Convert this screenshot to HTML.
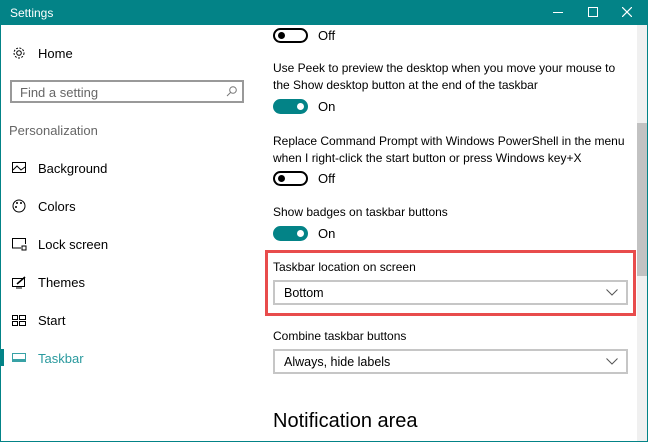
<!DOCTYPE html>
<html><head><style>
*{margin:0;padding:0;box-sizing:border-box}
body{width:648px;height:442px;position:relative;overflow:hidden;background:#fff;font-family:"Liberation Sans",sans-serif;color:#000}
.t{position:absolute;white-space:nowrap}
.title{position:absolute;left:0;top:0;width:648px;height:25px;background:#038387;color:#fff;font-size:12px}
.nav{font-size:13px;position:absolute;left:38px}
.ic{position:absolute;left:12px}
.tg{position:absolute;left:273px;width:35px;height:15px;border-radius:8px}
.off{border:2px solid #000}
.off:after{content:"";position:absolute;left:3px;top:2px;width:7px;height:7px;border-radius:50%;background:#000}
.on{background:#038387}
.on:after{content:"";position:absolute;right:4px;top:4px;width:7px;height:7px;border-radius:50%;background:#fff}
.lbl{font-size:13px;left:318px}
.p{font-size:12px;left:273px;line-height:17px}
.dd{position:absolute;left:273px;width:355px;height:25px;border:2px solid #c6c6c6;font-size:12.5px;padding:4px 0 0 9px}
.dd svg{position:absolute;right:8px;top:7px}
</style></head><body>
<div class="title"><span class="t" style="left:10px;top:6px">Settings</span>
<span class="t" style="left:553px;top:12px;width:10px;height:1px;background:#fff"></span>
<span class="t" style="left:588px;top:7px;width:10px;height:10px;border:1px solid #fff"></span>
<svg class="t" style="left:622px;top:7px" width="10" height="10"><path d="M0 0L10 10M10 0L0 10" stroke="#fff" stroke-width="1.2"/></svg>
</div>
<div class="t" style="left:0;top:25px;width:1px;height:417px;background:#038387"></div>
<div class="t" style="left:647px;top:25px;width:1px;height:417px;background:#038387"></div>
<div class="t" style="left:0;top:441px;width:648px;height:1px;background:#038387"></div>
<div class="t" style="left:637px;top:25px;width:10px;height:416px;background:#f0f0f0"></div>
<div class="t" style="left:637px;top:123px;width:10px;height:153px;background:#c2c2c2"></div>
<svg class="ic" style="top:46px" width="14" height="14" viewBox="0 0 14 14"><circle cx="7" cy="7" r="2.3" fill="none" stroke="#000"/><circle cx="7" cy="7" r="5" fill="none" stroke="#000" stroke-dasharray="2 1.4"/></svg>
<span class="t nav" style="top:46px">Home</span>
<div class="t" style="left:10px;top:80px;width:234px;height:23px;border:2px solid #999;font-size:13px;color:#666;padding:3px 0 0 8px">Find a setting
<svg style="position:absolute;right:5px;top:4px" width="11" height="11"><circle cx="7" cy="4" r="3.3" fill="none" stroke="#777"/><path d="M4.5 6.5L1 10" stroke="#777"/></svg></div>
<span class="t" style="left:9px;top:123px;font-size:13px;color:#666">Personalization</span>
<svg class="ic" style="top:162px" width="14" height="12"><rect x=".5" y=".5" width="13" height="10" fill="none" stroke="#000"/><path d="M1 8L5 4L9 8L13 5" fill="none" stroke="#000"/></svg>
<span class="t nav" style="top:161px">Background</span>
<svg class="ic" style="top:199px" width="14" height="14"><circle cx="7" cy="7" r="6" fill="none" stroke="#000"/><circle cx="5" cy="4" r="1" fill="#000"/><circle cx="9" cy="4" r="1" fill="#000"/><circle cx="4" cy="8" r="1" fill="#000"/></svg>
<span class="t nav" style="top:199px">Colors</span>
<svg class="ic" style="top:238px" width="15" height="13"><path d="M9 10H.5V.5h13V6" fill="none" stroke="#000"/><rect x="10" y="8" width="4" height="4" fill="none" stroke="#000"/></svg>
<span class="t nav" style="top:237px">Lock screen</span>
<svg class="ic" style="top:276px" width="15" height="13"><rect x=".5" y="2.5" width="12" height="8" fill="none" stroke="#000"/><path d="M5 8L13 1" stroke="#000" stroke-width="1.5"/><path d="M4 12h6" stroke="#000"/></svg>
<span class="t nav" style="top:275px">Themes</span>
<svg class="ic" style="top:315px" width="15" height="12"><rect x=".5" y=".5" width="5" height="4" fill="none" stroke="#000"/><rect x="7.5" y=".5" width="6" height="4" fill="none" stroke="#000"/><rect x=".5" y="6.5" width="5" height="4" fill="none" stroke="#000"/><rect x="7.5" y="6.5" width="6" height="4" fill="none" stroke="#000"/></svg>
<span class="t nav" style="top:313px">Start</span>
<div class="t" style="left:0;top:349px;width:4px;height:17px;background:#038387"></div>
<svg class="ic" style="top:353px" width="15" height="10"><rect x=".5" y=".5" width="13" height="8" fill="none" stroke="#38a2a6"/><rect x="1" y="6" width="12" height="3" fill="#38a2a6"/></svg>
<span class="t nav" style="top:351px;color:#2a9a9e">Taskbar</span>
<div class="tg off" style="top:28px"></div><span class="t lbl" style="top:28px">Off</span>
<div class="t p" style="top:60px">Use Peek to preview the desktop when you move your mouse to<br>the Show desktop button at the end of the taskbar</div>
<div class="tg on" style="top:99px"></div><span class="t lbl" style="top:99px">On</span>
<div class="t p" style="top:133px">Replace Command Prompt with Windows PowerShell in the menu<br>when I right-click the start button or press Windows key+X</div>
<div class="tg off" style="top:171px"></div><span class="t lbl" style="top:171px">Off</span>
<div class="t p" style="top:204px">Show badges on taskbar buttons</div>
<div class="tg on" style="top:226px"></div><span class="t lbl" style="top:226px">On</span>
<div class="t" style="left:265px;top:250px;width:371px;height:66px;border:3px solid #e84c4c"></div>
<div class="t p" style="top:259px">Taskbar location on screen</div>
<div class="dd" style="top:280px">Bottom<svg width="12" height="7"><path d="M.5 .5L6 6L11.5 .5" fill="none" stroke="#555"/></svg></div>
<div class="t p" style="top:328px">Combine taskbar buttons</div>
<div class="dd" style="top:349px">Always, hide labels<svg width="12" height="7"><path d="M.5 .5L6 6L11.5 .5" fill="none" stroke="#555"/></svg></div>
<div class="t" style="left:273px;top:410px;font-size:20px">Notification area</div>
</body></html>
